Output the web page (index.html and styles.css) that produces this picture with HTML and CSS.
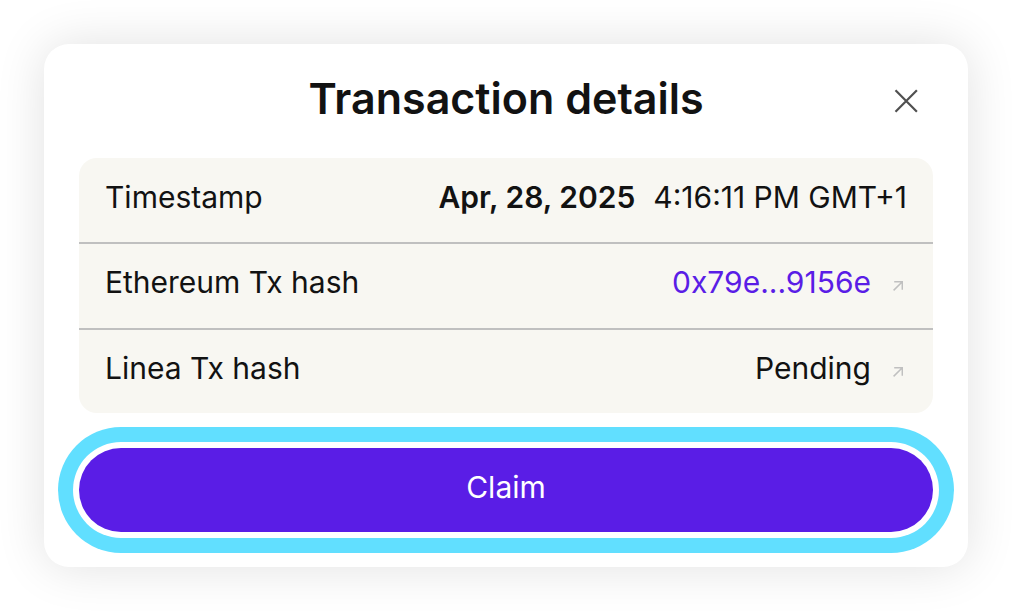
FILE: index.html
```html
<!DOCTYPE html>
<html lang="en">
<head>
<meta charset="utf-8">
<meta name="viewport" content="width=device-width, initial-scale=1">
<title>Transaction details</title>
<link rel="stylesheet" href="styles.css">
</head>
<body>
<main class="dialog" role="dialog" aria-labelledby="dialog-title">
  <header class="dialog-header">
    <h1 class="dialog-title" id="dialog-title">Transaction details</h1>
    <button class="close" type="button" aria-label="Close">
      <svg class="close-icon" viewBox="0 0 24 24" aria-hidden="true"><path d="M1.5 1.3 22.9 22.7M22.9 1.3 1.5 22.7"/></svg>
    </button>
  </header>
  <dl class="details">
    <div class="row">
      <dt class="label">Timestamp</dt>
      <dd class="value value-time"><strong class="date">Apr, 28, 2025</strong><span>4:16:11 PM GMT+1</span></dd>
    </div>
    <div class="row">
      <dt class="label">Ethereum Tx hash</dt>
      <dd class="value"><a class="hash" href="#">0x79e...9156e</a>
        <svg class="arrow" viewBox="0 0 10 10" aria-hidden="true"><path d="M.6 9.4 9.3 .7M1.2 .7H9.3V8.8"/></svg></dd>
    </div>
    <div class="row">
      <dt class="label">Linea Tx hash</dt>
      <dd class="value"><span>Pending</span>
        <svg class="arrow" viewBox="0 0 10 10" aria-hidden="true"><path d="M.6 9.4 9.3 .7M1.2 .7H9.3V8.8"/></svg></dd>
    </div>
  </dl>
  <button class="claim" type="button">Claim</button>
</main>
</body>
</html>
```
FILE: styles.css
```css
* {
  box-sizing: border-box;
}

body {
  margin: 0;
  padding: 44px;
  background: #fff;
  color: #121212;
  font-family: Inter, "Liberation Sans", sans-serif;
  font-size: 30px;
  line-height: 40px;
}

.dialog {
  padding: 25px 35px 35px;
  border-radius: 25px;
  background: #fff;
  box-shadow: 0 0 50px rgba(0, 0, 0, 0.12);
}

.dialog-header {
  display: grid;
  grid-template-columns: 54px 1fr 54px;
  align-items: center;
  margin-bottom: 31px;
}

.dialog-title {
  grid-column: 2;
  margin: 0;
  font-size: 43px;
  font-weight: 600;
  line-height: 58px;
  text-align: center;
}

.close {
  display: grid;
  place-items: center;
  padding: 6px 0 0;
  border: 0;
  background: none;
  cursor: pointer;
}

.close-icon {
  width: 24px;
  height: 24px;
  fill: none;
  stroke: #505050;
  stroke-width: 2.2;
}

.details {
  margin: 0 0 35px;
  border-radius: 18px;
  background: #f8f7f2;
}

.row {
  display: flex;
  justify-content: space-between;
  padding: 18px 26px 26px;
}

.row:first-child {
  padding-top: 19px;
  padding-bottom: 25px;
}

.row:last-child {
  padding-bottom: 25px;
}

.row + .row {
  border-top: 2px solid #c0c0c0;
}

.value {
  display: flex;
  align-items: center;
  gap: 22px;
  margin: 0;
  padding-right: 4px;
}

.value-time {
  gap: 18px;
  padding-right: 0;
}

.date {
  font-weight: 600;
}

.hash {
  color: #5a1de6;
  text-decoration: none;
}

.arrow {
  width: 10px;
  height: 10px;
  margin-top: 8px;
  fill: none;
  stroke: #c0c0c0;
  stroke-width: 1.5;
}

.claim {
  display: block;
  width: 100%;
  padding: 19px 26px 25px;
  border: 0;
  border-radius: 42px;
  background: #5a1de6;
  box-shadow: 0 0 0 6px #fff, 0 0 0 21px #61dfff;
  color: #fff;
  font: inherit;
  cursor: pointer;
}
```
